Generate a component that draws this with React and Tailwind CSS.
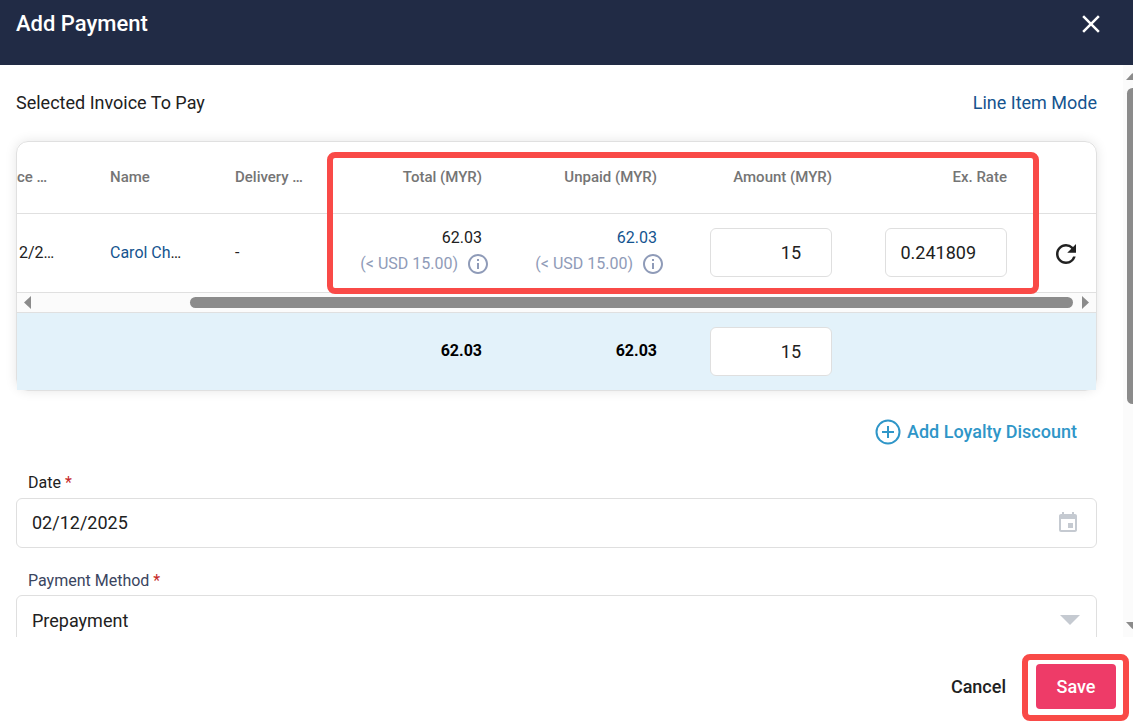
import React, { useState } from "react";
import { MdClose, MdEvent, MdOutlineInfo, MdRefresh } from "react-icons/md";

const columns = [
  { label: "ce …", align: "text-left" },
  { label: "Name", align: "text-left pl-[25px]" },
  { label: "Delivery …", align: "text-left pl-[25px]" },
  { label: "Total (MYR)", align: "text-right pr-[25px]" },
  { label: "Unpaid (MYR)", align: "text-right pr-[25px]" },
  { label: "Amount (MYR)", align: "text-right pr-[25px]" },
  { label: "Ex. Rate", align: "text-right pr-[25px]" },
];

function InvoiceColumns() {
  return (
    <colgroup>
      <col className="w-[68px]" />
      <col />
      <col className="w-[122px]" />
      <col className="w-[175px]" />
      <col className="w-[175px]" />
      <col className="w-[175px]" />
      <col className="w-[175px]" />
      <col className="w-[64px]" />
    </colgroup>
  );
}

function NumberBox({ label, value, onChange }) {
  return (
    <input
      type="text"
      aria-label={label}
      value={value}
      onChange={(e) => onChange(e.target.value)}
      className="h-[49px] w-[122px] rounded-md border border-[#dfdfdf] bg-white pr-[30px] text-right text-[18px] text-[#212121] outline-none"
    />
  );
}

function MoneyCell({ value, note, color }) {
  return (
    <td className="pr-[17px] pb-1">
      <div className={`mr-2 text-right leading-[26px] ${color}`}>{value}</div>
      <div className="flex items-center justify-end gap-2 leading-[26px] text-[#8f9bb8]">
        <span className="whitespace-nowrap">{note}</span>
        <MdOutlineInfo size={24} />
      </div>
    </td>
  );
}

function HorizontalScrollbar() {
  return (
    <div className="flex h-5 items-center border-t border-[#e0e0e0] bg-[#fbfbfb] px-[7px]">
      <svg width="7" height="13" viewBox="0 0 7 13" fill="#8b8b8b">
        <path d="M7 0v13L0 6.5z" />
      </svg>
      <div className="mr-[9px] ml-[159px] h-[11px] flex-1 rounded-full bg-[#8b8b8b]" />
      <svg width="7" height="13" viewBox="0 0 7 13" fill="#8b8b8b">
        <path d="M0 0v13l7-6.5z" />
      </svg>
    </div>
  );
}

function VerticalScrollbar() {
  return (
    <div className="flex w-[10px] shrink-0 flex-col justify-between overflow-hidden bg-[#fbfbfb] py-2 pl-[3px]">
      <div className="flex grow flex-col">
        <svg width="13" height="7" viewBox="0 0 13 7" fill="#8b8b8b">
          <path d="M0 7h13L6.5 0z" />
        </svg>
        <div className="mt-2 ml-px h-[316px] w-[11px] rounded-full bg-[#8b8b8b]" />
      </div>
      <svg width="13" height="7" viewBox="0 0 13 7" fill="#8b8b8b" className="shrink-0">
        <path d="M0 0h13L6.5 7z" />
      </svg>
    </div>
  );
}

export default function App() {
  const [amount, setAmount] = useState("15");
  const [rate, setRate] = useState("0.241809");
  const [date, setDate] = useState("02/12/2025");

  return (
    <div className="flex h-screen flex-col bg-white font-['Roboto',sans-serif] text-[16px] text-[#212121]">
      {/* Header */}
      <header className="flex h-[65px] shrink-0 items-start justify-between bg-[#212b45] pt-[9px] pr-[27px] pl-4 text-white">
        <h1 className="text-[22px] leading-[30px] font-medium">Add Payment</h1>
        <button type="button" aria-label="Close">
          <MdClose size={30} />
        </button>
      </header>

      {/* Body */}
      <div className="flex min-h-0 flex-1">
        <main className="min-w-0 flex-1 overflow-hidden pt-[25px] pr-[26px] pl-4">
          <div className="flex items-center justify-between text-[18px] leading-[26px]">
            <h2>Selected Invoice To Pay</h2>
            <a href="#line-item" className="text-[#15548f]">
              Line Item Mode
            </a>
          </div>

          {/* Invoice table */}
          <div className="relative mt-[25px] rounded-xl border border-[#e0e0e0] shadow-[0_0_12px_rgba(0,0,0,0.1)]">
            <table className="w-full table-fixed">
              <InvoiceColumns />
              <thead>
                <tr className="h-[71px] text-[15px] text-[#757575]">
                  {columns.map((col) => (
                    <th key={col.label} className={`font-medium whitespace-nowrap ${col.align}`}>
                      {col.label}
                    </th>
                  ))}
                  <td />
                </tr>
              </thead>
              <tbody>
                <tr className="h-[79px] border-t border-[#e0e0e0]">
                  <td className="pl-0.5">2/2…</td>
                  <td className="pl-[25px] whitespace-nowrap">
                    <a href="#customer" className="text-[#15548f]">
                      Carol Ch
                    </a>
                    …
                  </td>
                  <td className="pl-[25px]">-</td>
                  <MoneyCell value="62.03" note="(< USD 15.00)" color="text-[#212121]" />
                  <MoneyCell value="62.03" note="(< USD 15.00)" color="text-[#15548f]" />
                  <td className="pr-[25px] text-right">
                    <NumberBox label="Amount" value={amount} onChange={setAmount} />
                  </td>
                  <td className="pr-[25px] text-right">
                    <NumberBox label="Exchange rate" value={rate} onChange={setRate} />
                  </td>
                  <td className="pt-0.5 pl-[19px]">
                    <button type="button" aria-label="Refresh rate" className="block">
                      <MdRefresh size={30} />
                    </button>
                  </td>
                </tr>
              </tbody>
            </table>
            <HorizontalScrollbar />
            <table className="w-full table-fixed border-t border-[#e0e0e0] bg-[#e3f2fa]">
              <InvoiceColumns />
              <tbody>
                <tr className="h-[77px] font-bold text-black">
                  <td />
                  <td />
                  <td />
                  <td className="pr-[25px] text-right">62.03</td>
                  <td className="pr-[25px] text-right">62.03</td>
                  <td className="pr-[25px] text-right font-normal">
                    <NumberBox label="Total amount" value={amount} onChange={setAmount} />
                  </td>
                  <td />
                  <td />
                </tr>
              </tbody>
            </table>
            <div className="pointer-events-none absolute top-[10px] right-[57px] h-[142px] w-[712px] rounded-lg border-[6px] border-[#f94a47]" />
          </div>

          <div className="mt-7 flex justify-end pr-5">
            <button
              type="button"
              className="flex items-center gap-[6px] text-[18px] leading-[26px] font-medium text-[#2f96c8]"
            >
              <svg width="26" height="26" viewBox="0 0 26 26" fill="none" stroke="currentColor" strokeWidth="2">
                <circle cx="13" cy="13" r="11.5" />
                <path d="M13 7v12M7 13h12" />
              </svg>
              Add Loyalty Discount
            </button>
          </div>

          <div className="mt-[25px]">
            <label htmlFor="date" className="block pl-3 leading-[26px]">
              Date <span className="text-[#c62828]">*</span>
            </label>
            <div className="mt-0.5 flex h-[50px] items-center rounded-md border border-[#dfdfdf] pr-4 pl-[15px]">
              <input
                id="date"
                type="text"
                value={date}
                onChange={(e) => setDate(e.target.value)}
                className="min-w-0 flex-1 text-[18px] outline-none"
              />
              <MdEvent size={24} className="text-[#c5cad1]" />
            </div>
          </div>

          <div className="mt-5">
            <label htmlFor="method" className="block pl-3 leading-[26px] text-[#3a4560]">
              Payment Method <span className="text-[#c62828]">*</span>
            </label>
            <div className="relative mt-px">
              <select
                id="method"
                className="h-[51px] w-full appearance-none rounded-md border border-[#dfdfdf] bg-white pl-[15px] text-[18px] outline-none"
              >
                <option>Prepayment</option>
              </select>
              <svg
                width="20"
                height="10"
                viewBox="0 0 20 10"
                fill="#c5cad1"
                className="pointer-events-none absolute top-5 right-[17px]"
              >
                <path d="M0 0h20L10 10z" />
              </svg>
            </div>
          </div>
        </main>
        <VerticalScrollbar />
      </div>

      {/* Footer */}
      <footer className="flex shrink-0 items-center justify-end gap-[30px] pt-[27px] pr-[17px] pb-[18px] text-[18px] font-medium">
        <button type="button">Cancel</button>
        <div className="relative">
          <button type="button" className="h-[45px] w-20 rounded bg-[#ee3b68] text-white">
            Save
          </button>
          <div className="pointer-events-none absolute -top-[10px] -right-[13px] -bottom-3 -left-[14px] rounded-lg border-[6px] border-[#f94a47]" />
        </div>
      </footer>
    </div>
  );
}
